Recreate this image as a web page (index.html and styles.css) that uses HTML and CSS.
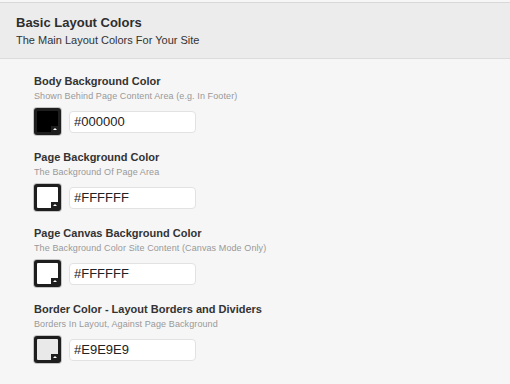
FILE: index.html
```html
<!DOCTYPE html>
<html lang="en">
<head>
    <meta charset="UTF-8">
    <title>Layout Colors</title>
    <link rel="stylesheet" href="styles.css">
</head>
<body>
    <div class="section-head">
        <h2>Basic Layout Colors</h2>
        <p>The Main Layout Colors For Your Site</p>
    </div>
    <div class="options">
        <div class="option">
            <label>Body Background Color</label>
            <div class="desc">Shown Behind Page Content Area (e.g. In Footer)</div>
            <div class="picker">
                <span class="swatch"><span class="fill" style="background:#000000"></span><span class="arrow"></span></span>
                <input type="text" class="hex" value="#000000">
            </div>
        </div>
        <div class="option">
            <label>Page Background Color</label>
            <div class="desc">The Background Of Page Area</div>
            <div class="picker">
                <span class="swatch"><span class="fill" style="background:#FFFFFF"></span><span class="arrow"></span></span>
                <input type="text" class="hex" value="#FFFFFF">
            </div>
        </div>
        <div class="option">
            <label>Page Canvas Background Color</label>
            <div class="desc">The Background Color Site Content (Canvas Mode Only)</div>
            <div class="picker">
                <span class="swatch"><span class="fill" style="background:#FFFFFF"></span><span class="arrow"></span></span>
                <input type="text" class="hex" value="#FFFFFF">
            </div>
        </div>
        <div class="option">
            <label>Border Color - Layout Borders and Dividers</label>
            <div class="desc">Borders In Layout, Against Page Background</div>
            <div class="picker">
                <span class="swatch"><span class="fill" style="background:#E9E9E9"></span><span class="arrow"></span></span>
                <input type="text" class="hex" value="#E9E9E9">
            </div>
        </div>
    </div>
</body>
</html>
```

FILE: styles.css
```css
body {
    font-family: "Liberation Sans", Arial, Helvetica, sans-serif;
    background-color: #f6f6f6;
    color: #333;
    margin: 0;
    padding: 0;
}
.section-head {
    margin-top: 2px;
    background-color: #ececec;
    border-top: 1px solid #d8d8d8;
    border-bottom: 1px solid #dcdcdc;
    padding: 12px 16px 11px;
}
.section-head h2 {
    margin: 0 0 2px;
    font-size: 13px;
    line-height: 16px;
    color: #2e2e2e;
}
.section-head p {
    margin: 0;
    font-size: 11px;
    line-height: 14px;
    color: #333;
}
.options {
    padding: 15px 34px 0;
}
.option {
    margin-bottom: 15px;
}
.option label {
    display: block;
    font-size: 11px;
    line-height: 14px;
    font-weight: bold;
    color: #333;
}
.desc {
    margin-top: 2px;
    font-size: 9px;
    line-height: 12px;
    letter-spacing: 0.1px;
    color: #999;
}
.picker {
    display: flex;
    align-items: center;
    gap: 8px;
    margin-top: 6px;
}
.swatch {
    position: relative;
    display: block;
    box-sizing: border-box;
    width: 27px;
    height: 27px;
    padding: 3px;
    background-color: #1e1e1e;
    border-radius: 3px;
    box-shadow: 0 0 0 1px #c4c4c4;
}
.swatch .fill {
    display: block;
    width: 100%;
    height: 100%;
    border-radius: 1px;
}
.swatch .arrow {
    position: absolute;
    right: 3px;
    bottom: 3px;
    width: 7px;
    height: 6px;
    background-color: #1e1e1e;
}
.swatch .arrow::after {
    content: "";
    position: absolute;
    left: 2px;
    top: 2px;
    border-left: 2px solid transparent;
    border-right: 2px solid transparent;
    border-bottom: 2px solid #fff;
}
.hex {
    box-sizing: border-box;
    width: 127px;
    height: 22px;
    margin: 0;
    padding: 0 4px;
    background-color: #fff;
    border: 1px solid #e2e2e2;
    border-radius: 4px;
    font-family: "Liberation Sans", Arial, Helvetica, sans-serif;
    font-size: 13px;
    color: #222;
    outline: none;
}
```
